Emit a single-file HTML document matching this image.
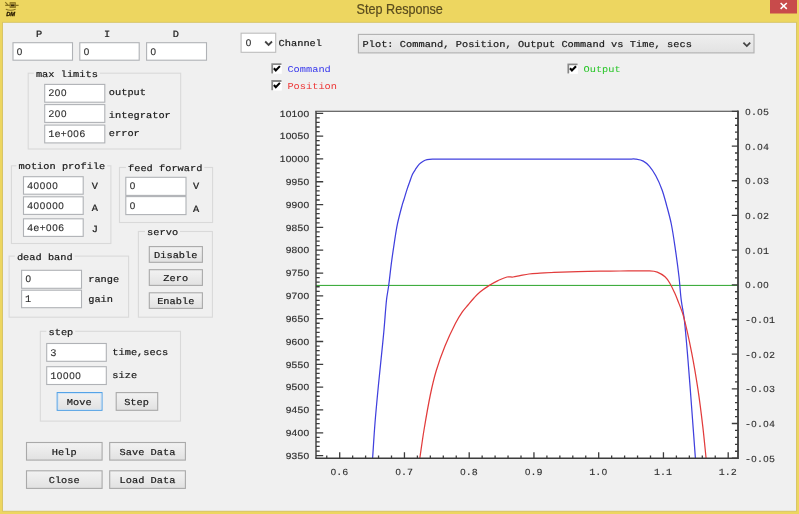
<!DOCTYPE html>
<html><head><meta charset="utf-8"><title>Step Response</title>
<style>
html,body{margin:0;padding:0;}
body{width:799px;height:514px;overflow:hidden;background:#EDD660;position:relative;}
#root{position:absolute;left:0;top:0;width:799px;height:514px;will-change:transform;}
.abs{position:absolute;left:0;top:0;}
#title{position:absolute;left:0;top:0.3px;width:799px;height:22px;text-align:center;font-family:"Liberation Sans",sans-serif;font-size:13.8px;line-height:20px;color:#5a4c1e;-webkit-text-stroke:0.2px #5a4c1e;transform:translateX(0.2px) scaleX(0.915);transform-origin:399.5px 0;}
svg text{font-family:"Liberation Mono",monospace;text-rendering:geometricPrecision;}
svg .z{font-family:"Liberation Sans",sans-serif;}
svg .s{font-family:"Liberation Sans",sans-serif;}
</style></head><body><div id="root">
<div id="title">Step Response</div>
<svg class="abs" width="799" height="514" viewBox="0 0 799 514">
<defs><linearGradient id="bg" x1="0" y1="0" x2="0" y2="1"><stop offset="0" stop-color="#f2f2f2"/><stop offset="0.45" stop-color="#ebebeb"/><stop offset="1" stop-color="#e1e1e1"/></linearGradient><linearGradient id="cg" x1="0" y1="0" x2="0" y2="1"><stop offset="0" stop-color="#efefef"/><stop offset="1" stop-color="#e2e2e2"/></linearGradient></defs>
<rect x="2.60" y="22.30" width="793.90" height="488.90" fill="#F0F0F0" stroke="#d3bf5c" stroke-width="0.8"/>
<rect x="770.00" y="0.00" width="27.00" height="13.50" fill="#C84B4B"/>
<path d="M780.6 3.0 L786.8 8.9 M786.8 3.0 L780.6 8.9" stroke="#fff" stroke-width="1.5" fill="none"/>
<g transform="translate(4,1)"><path d="M1.2 1.2 L4 4 M1.2 4.4 H14.6 M1.8 8.2 Q6.5 10.4 11.6 8.2" stroke="#8a7420" stroke-width="1.1" fill="none"/><rect x="6" y="1.6" width="5.4" height="5" fill="#a8923a" stroke="#8a7420" stroke-width="0.8"/><rect x="7" y="3.6" width="3.4" height="1.6" fill="#3a2c08"/><text x="2.2" y="14.5" class="s" font-size="5.8" font-weight="bold" font-style="italic" fill="#2a1d00" stroke="#2a1d00" stroke-width="0.3">DM</text></g>
<rect x="13.00" y="42.70" width="59.50" height="17.50" fill="#fff" stroke="#b0b2b6" stroke-width="1.1"/>
<rect x="79.80" y="42.70" width="59.40" height="17.50" fill="#fff" stroke="#b0b2b6" stroke-width="1.1"/>
<rect x="146.60" y="42.70" width="59.90" height="17.50" fill="#fff" stroke="#b0b2b6" stroke-width="1.1"/>
<rect x="28.20" y="73.20" width="152.50" height="75.80" fill="none" stroke="#d9d9d9" stroke-width="1.1"/>
<rect x="33.80" y="71.20" width="66.00" height="4.00" fill="#F0F0F0"/>
<rect x="44.70" y="84.40" width="60.10" height="17.80" fill="#fff" stroke="#b0b2b6" stroke-width="1.1"/>
<rect x="44.70" y="104.60" width="60.10" height="17.80" fill="#fff" stroke="#b0b2b6" stroke-width="1.1"/>
<rect x="44.70" y="125.10" width="60.10" height="17.80" fill="#fff" stroke="#b0b2b6" stroke-width="1.1"/>
<rect x="11.45" y="165.80" width="99.45" height="77.70" fill="none" stroke="#d9d9d9" stroke-width="1.1"/>
<rect x="16.40" y="163.80" width="90.80" height="4.00" fill="#F0F0F0"/>
<rect x="23.50" y="176.70" width="59.70" height="17.50" fill="#fff" stroke="#b0b2b6" stroke-width="1.1"/>
<rect x="23.50" y="196.80" width="59.70" height="17.60" fill="#fff" stroke="#b0b2b6" stroke-width="1.1"/>
<rect x="23.50" y="218.80" width="59.70" height="17.60" fill="#fff" stroke="#b0b2b6" stroke-width="1.1"/>
<rect x="119.50" y="167.50" width="93.10" height="55.00" fill="none" stroke="#d9d9d9" stroke-width="1.1"/>
<rect x="125.90" y="165.50" width="78.40" height="4.00" fill="#F0F0F0"/>
<rect x="125.80" y="177.30" width="60.20" height="18.10" fill="#fff" stroke="#b0b2b6" stroke-width="1.1"/>
<rect x="125.80" y="196.60" width="60.20" height="18.00" fill="#fff" stroke="#b0b2b6" stroke-width="1.1"/>
<rect x="138.40" y="231.50" width="74.00" height="85.70" fill="none" stroke="#d9d9d9" stroke-width="1.1"/>
<rect x="145.00" y="229.50" width="35.00" height="4.00" fill="#F0F0F0"/>
<rect x="149.30" y="246.60" width="53.10" height="15.70" fill="url(#bg)" stroke="#a9a9a9" stroke-width="1.1"/>
<rect x="149.30" y="269.70" width="53.10" height="15.70" fill="url(#bg)" stroke="#a9a9a9" stroke-width="1.1"/>
<rect x="149.30" y="292.80" width="53.10" height="15.60" fill="url(#bg)" stroke="#a9a9a9" stroke-width="1.1"/>
<rect x="9.10" y="256.10" width="119.50" height="61.10" fill="none" stroke="#d9d9d9" stroke-width="1.1"/>
<rect x="14.80" y="254.10" width="59.80" height="4.00" fill="#F0F0F0"/>
<rect x="21.60" y="270.30" width="59.90" height="18.00" fill="#fff" stroke="#b0b2b6" stroke-width="1.1"/>
<rect x="21.60" y="290.20" width="59.90" height="17.50" fill="#fff" stroke="#b0b2b6" stroke-width="1.1"/>
<rect x="40.30" y="331.30" width="140.20" height="89.80" fill="none" stroke="#d9d9d9" stroke-width="1.1"/>
<rect x="46.40" y="329.30" width="28.80" height="4.00" fill="#F0F0F0"/>
<rect x="46.70" y="343.50" width="59.60" height="17.80" fill="#fff" stroke="#b0b2b6" stroke-width="1.1"/>
<rect x="46.70" y="366.70" width="59.60" height="17.80" fill="#fff" stroke="#b0b2b6" stroke-width="1.1"/>
<rect x="57.20" y="392.60" width="44.80" height="17.70" fill="url(#bg)" stroke="#4d9fe6" stroke-width="1.1"/>
<rect x="58.20" y="393.60" width="42.80" height="15.70" fill="none" stroke="#cfe3f5" stroke-width="0.9"/>
<rect x="116.20" y="392.60" width="41.50" height="17.70" fill="url(#bg)" stroke="#a9a9a9" stroke-width="1.1"/>
<rect x="26.50" y="442.50" width="75.60" height="17.60" fill="url(#bg)" stroke="#a9a9a9" stroke-width="1.1"/>
<rect x="109.70" y="442.50" width="75.70" height="17.60" fill="url(#bg)" stroke="#a9a9a9" stroke-width="1.1"/>
<rect x="26.50" y="470.80" width="75.60" height="17.60" fill="url(#bg)" stroke="#a9a9a9" stroke-width="1.1"/>
<rect x="109.70" y="470.80" width="75.70" height="17.60" fill="url(#bg)" stroke="#a9a9a9" stroke-width="1.1"/>
<rect x="241.10" y="33.20" width="34.60" height="19.10" fill="#fff" stroke="#bdbdbd" stroke-width="1.1"/>
<path d="M265.20 41.50 L268.60 44.90 L272.00 41.50" stroke="#444" stroke-width="1.8" fill="none"/>
<rect x="358.40" y="34.40" width="395.60" height="18.50" fill="url(#cg)" stroke="#b0b0b0" stroke-width="1.1"/>
<path d="M743.40 42.70 L746.80 46.10 L750.20 42.70" stroke="#444" stroke-width="1.8" fill="none"/>
<rect x="271.20" y="63.20" width="10.60" height="10.60" fill="#fff"/>
<path d="M272.20 73.50 V64.20 H281.50" stroke="#888888" stroke-width="1.8" fill="none"/>
<path d="M273.90 68.20 L275.80 70.40 L279.90 66.10" stroke="#000" stroke-width="2.1" fill="none"/>
<rect x="271.20" y="80.00" width="10.60" height="10.60" fill="#fff"/>
<path d="M272.20 90.30 V81.00 H281.50" stroke="#888888" stroke-width="1.8" fill="none"/>
<path d="M273.90 85.00 L275.80 87.20 L279.90 82.90" stroke="#000" stroke-width="2.1" fill="none"/>
<rect x="567.30" y="63.30" width="10.60" height="10.60" fill="#fff"/>
<path d="M568.30 73.60 V64.30 H577.60" stroke="#888888" stroke-width="1.8" fill="none"/>
<path d="M570.00 68.30 L571.90 70.50 L576.00 66.20" stroke="#000" stroke-width="2.1" fill="none"/>
<rect x="316.0" y="111.2" width="421.79999999999995" height="347.0" fill="#fff"/>
<clipPath id="cp"><rect x="316.0" y="111.2" width="421.79999999999995" height="347.0"/></clipPath>
<path d="M316.0 285.4 H737.8" stroke="#2aa42a" stroke-width="1.0" fill="none"/>
<path d="M372.6 458.4 C373.40 446.60 374.06 434.79 375.0 423.0 C376.03 410.15 377.26 397.33 378.5 384.5 C380.19 366.99 382.14 349.51 383.8 332.0 C384.81 321.34 385.48 309.72 386.5 300.0 C387.01 295.14 388.06 290.35 388.7 285.5 C389.62 278.54 390.29 271.56 391.2 264.6 C392.15 257.32 393.19 250.06 394.3 242.8 C395.26 236.55 396.11 230.29 397.4 224.1 C398.72 217.78 401.15 208.89 402.1 205.3 C402.58 203.51 403.25 201.77 403.8 200.0 C404.90 196.46 406.01 192.58 407.2 188.9 C407.94 186.61 408.78 184.36 409.6 182.1 C410.55 179.49 411.34 176.82 412.5 174.3 C413.28 172.60 414.36 171.06 415.4 169.5 C416.63 167.65 417.78 165.72 419.3 164.1 C420.41 162.92 421.79 162.00 423.2 161.2 C424.41 160.52 425.74 160.01 427.1 159.7 C428.87 159.30 430.69 159.19 432.5 159.1 C435.00 158.97 437.50 159.05 440.0 159.1 C445.00 159.05 626.33 159.05 630.0 159.1 C631.83 159.05 633.69 158.82 635.5 159.1 C638.15 159.51 640.92 159.86 643.3 161.1 C645.71 162.36 647.74 164.33 649.5 166.4 C651.94 169.27 654.02 172.48 655.8 175.8 C658.20 180.27 660.26 184.94 662.0 189.7 C663.86 194.79 665.18 200.07 666.6 205.3 C668.28 211.50 670.04 217.70 671.3 224.0 C672.94 232.21 674.09 240.51 675.3 248.8 C676.66 258.12 677.92 267.45 679.0 276.8 C679.89 284.45 680.25 292.16 681.2 299.8 C682.02 306.40 683.56 312.89 684.3 319.5 C685.79 332.71 686.87 346.62 688.0 360.2 C689.33 376.19 690.49 392.20 691.7 408.2 C692.96 424.93 694.17 441.67 695.4 458.4" stroke="#4040de" stroke-width="1.25" fill="none" stroke-linejoin="round" clip-path="url(#cp)"/>
<path d="M419.8 458.4 C421.20 448.93 422.44 439.44 424.0 430.0 C425.94 418.31 427.90 406.61 430.3 395.0 C432.00 386.77 433.88 378.55 436.3 370.5 C438.79 362.20 441.73 354.03 445.0 346.0 C448.14 338.28 451.71 330.73 455.5 323.3 C457.55 319.28 459.95 315.43 462.5 311.7 C464.13 309.31 466.14 307.21 468.0 305.0 C469.98 302.65 471.92 300.26 474.0 298.0 C475.92 295.92 477.82 293.80 480.0 292.0 C482.84 289.65 485.89 287.57 489.0 285.6 C491.90 283.76 494.90 282.08 498.0 280.6 C500.92 279.21 503.86 277.75 507.0 277.0 C508.94 276.53 511.01 277.21 513.0 277.0 C515.37 276.75 517.66 276.04 520.0 275.6 C522.99 275.04 525.97 274.36 529.0 274.0 C532.65 273.56 536.33 273.43 540.0 273.2 C544.66 272.90 549.33 272.60 554.0 272.4 C562.00 272.06 570.00 271.81 578.0 271.6 C585.33 271.41 592.67 271.30 600.0 271.2 C606.67 271.10 613.33 271.04 620.0 271.0 C629.83 270.94 644.25 270.75 649.5 270.9 C652.13 270.98 654.84 271.16 657.3 272.1 C660.11 273.17 662.74 274.81 665.0 276.8 C666.95 278.51 668.36 280.78 669.7 283.0 C671.50 285.97 672.94 289.15 674.4 292.3 C675.54 294.75 676.54 297.27 677.5 299.8 C679.42 304.86 682.06 310.85 683.6 316.6 C686.68 328.09 689.31 340.67 691.7 352.8 C694.11 365.04 696.14 377.36 698.0 389.7 C699.84 401.97 701.35 414.28 702.8 426.6 C704.05 437.18 705.00 447.80 706.1 458.4" stroke="#e23c3c" stroke-width="1.25" fill="none" stroke-linejoin="round" clip-path="url(#cp)"/>
<path d="M316.0 458.2 V111.2" stroke="#3c3c3c" stroke-width="1.4" fill="none"/>
<path d="M315.3 111.2 H737.8" stroke="#3c3c3c" stroke-width="1.15" fill="none"/>
<path d="M738.0 110.60000000000001 V459.09999999999997" stroke="#3c3c3c" stroke-width="1.8" fill="none"/>
<path d="M315.3 458.34999999999997 H737.8" stroke="#3c3c3c" stroke-width="1.5" fill="none"/>
<path d="M316.0 113.30 h7.2 M316.0 117.86 h3.7 M316.0 122.43 h3.7 M316.0 126.99 h3.7 M316.0 131.56 h3.7 M316.0 136.12 h7.2 M316.0 140.68 h3.7 M316.0 145.25 h3.7 M316.0 149.81 h3.7 M316.0 154.38 h3.7 M316.0 158.94 h7.2 M316.0 163.50 h3.7 M316.0 168.07 h3.7 M316.0 172.63 h3.7 M316.0 177.20 h3.7 M316.0 181.76 h7.2 M316.0 186.32 h3.7 M316.0 190.89 h3.7 M316.0 195.45 h3.7 M316.0 200.02 h3.7 M316.0 204.58 h7.2 M316.0 209.14 h3.7 M316.0 213.71 h3.7 M316.0 218.27 h3.7 M316.0 222.84 h3.7 M316.0 227.40 h7.2 M316.0 231.96 h3.7 M316.0 236.53 h3.7 M316.0 241.09 h3.7 M316.0 245.66 h3.7 M316.0 250.22 h7.2 M316.0 254.78 h3.7 M316.0 259.35 h3.7 M316.0 263.91 h3.7 M316.0 268.48 h3.7 M316.0 273.04 h7.2 M316.0 277.60 h3.7 M316.0 282.17 h3.7 M316.0 286.73 h3.7 M316.0 291.30 h3.7 M316.0 295.86 h7.2 M316.0 300.42 h3.7 M316.0 304.99 h3.7 M316.0 309.55 h3.7 M316.0 314.12 h3.7 M316.0 318.68 h7.2 M316.0 323.24 h3.7 M316.0 327.81 h3.7 M316.0 332.37 h3.7 M316.0 336.94 h3.7 M316.0 341.50 h7.2 M316.0 346.06 h3.7 M316.0 350.63 h3.7 M316.0 355.19 h3.7 M316.0 359.76 h3.7 M316.0 364.32 h7.2 M316.0 368.88 h3.7 M316.0 373.45 h3.7 M316.0 378.01 h3.7 M316.0 382.58 h3.7 M316.0 387.14 h7.2 M316.0 391.70 h3.7 M316.0 396.27 h3.7 M316.0 400.83 h3.7 M316.0 405.40 h3.7 M316.0 409.96 h7.2 M316.0 414.52 h3.7 M316.0 419.09 h3.7 M316.0 423.65 h3.7 M316.0 428.22 h3.7 M316.0 432.78 h7.2 M316.0 437.34 h3.7 M316.0 441.91 h3.7 M316.0 446.47 h3.7 M316.0 451.04 h3.7 M316.0 455.60 h7.2 " stroke="#3c3c3c" stroke-width="1.3" fill="none"/>
<path d="M737.8 111.40 h-6 M737.8 118.34 h-2.8 M737.8 125.27 h-2.8 M737.8 132.21 h-2.8 M737.8 139.14 h-2.8 M737.8 146.08 h-6 M737.8 153.02 h-2.8 M737.8 159.95 h-2.8 M737.8 166.89 h-2.8 M737.8 173.82 h-2.8 M737.8 180.76 h-6 M737.8 187.70 h-2.8 M737.8 194.63 h-2.8 M737.8 201.57 h-2.8 M737.8 208.50 h-2.8 M737.8 215.44 h-6 M737.8 222.38 h-2.8 M737.8 229.31 h-2.8 M737.8 236.25 h-2.8 M737.8 243.18 h-2.8 M737.8 250.12 h-6 M737.8 257.06 h-2.8 M737.8 263.99 h-2.8 M737.8 270.93 h-2.8 M737.8 277.86 h-2.8 M737.8 284.80 h-6 M737.8 291.74 h-2.8 M737.8 298.67 h-2.8 M737.8 305.61 h-2.8 M737.8 312.54 h-2.8 M737.8 319.48 h-6 M737.8 326.42 h-2.8 M737.8 333.35 h-2.8 M737.8 340.29 h-2.8 M737.8 347.22 h-2.8 M737.8 354.16 h-6 M737.8 361.10 h-2.8 M737.8 368.03 h-2.8 M737.8 374.97 h-2.8 M737.8 381.90 h-2.8 M737.8 388.84 h-6 M737.8 395.78 h-2.8 M737.8 402.71 h-2.8 M737.8 409.65 h-2.8 M737.8 416.58 h-2.8 M737.8 423.52 h-6 M737.8 430.46 h-2.8 M737.8 437.39 h-2.8 M737.8 444.33 h-2.8 M737.8 451.26 h-2.8 M737.8 458.20 h-6 " stroke="#3c3c3c" stroke-width="1.3" fill="none"/>
<path d="M326.75 458.2 v-2.6 M339.70 458.2 v-6 M352.65 458.2 v-2.6 M365.60 458.2 v-2.6 M378.55 458.2 v-2.6 M391.50 458.2 v-2.6 M404.45 458.2 v-6 M417.40 458.2 v-2.6 M430.35 458.2 v-2.6 M443.30 458.2 v-2.6 M456.25 458.2 v-2.6 M469.20 458.2 v-6 M482.15 458.2 v-2.6 M495.10 458.2 v-2.6 M508.05 458.2 v-2.6 M521.00 458.2 v-2.6 M533.95 458.2 v-6 M546.90 458.2 v-2.6 M559.85 458.2 v-2.6 M572.80 458.2 v-2.6 M585.75 458.2 v-2.6 M598.70 458.2 v-6 M611.65 458.2 v-2.6 M624.60 458.2 v-2.6 M637.55 458.2 v-2.6 M650.50 458.2 v-2.6 M663.45 458.2 v-6 M676.40 458.2 v-2.6 M689.35 458.2 v-2.6 M702.30 458.2 v-2.6 M715.25 458.2 v-2.6 M728.20 458.2 v-6 " stroke="#3c3c3c" stroke-width="1.3" fill="none"/>
<text transform="translate(36.00,36.70) scale(1,0.93)" x="0.00" y="0" font-size="10.33" fill="#1c1c1c" stroke="#1c1c1c" stroke-width="0.23" xml:space="preserve">P</text>
<text transform="translate(104.00,36.70) scale(1,0.93)" x="0.00" y="0" font-size="10.33" fill="#1c1c1c" stroke="#1c1c1c" stroke-width="0.23" xml:space="preserve">I</text>
<text transform="translate(172.80,36.70) scale(1,0.93)" x="0.00" y="0" font-size="10.33" fill="#1c1c1c" stroke="#1c1c1c" stroke-width="0.23" xml:space="preserve">D</text>
<text transform="translate(16.50,54.70) scale(1,0.985)" x="0.34" y="0" font-size="10.33" fill="#2e2e2e" stroke="#2e2e2e" stroke-width="0.12" xml:space="preserve"><tspan class="z" font-size="9.90">0</tspan></text>
<text transform="translate(83.30,54.70) scale(1,0.985)" x="0.34" y="0" font-size="10.33" fill="#2e2e2e" stroke="#2e2e2e" stroke-width="0.12" xml:space="preserve"><tspan class="z" font-size="9.90">0</tspan></text>
<text transform="translate(150.10,54.70) scale(1,0.985)" x="0.34" y="0" font-size="10.33" fill="#2e2e2e" stroke="#2e2e2e" stroke-width="0.12" xml:space="preserve"><tspan class="z" font-size="9.90">0</tspan></text>
<text transform="translate(35.90,76.80) scale(1,0.88)" x="0.00 6.20 12.40 18.60 24.80 31.00 37.20 43.40 49.60 55.80" y="0" font-size="10.33" fill="#1c1c1c" stroke="#1c1c1c" stroke-width="0.23" xml:space="preserve">max limits</text>
<text transform="translate(48.20,96.40) scale(1,0.985)" x="0.00 6.54 12.74" y="0" font-size="10.33" fill="#2e2e2e" stroke="#2e2e2e" stroke-width="0.12" xml:space="preserve">2<tspan class="z" font-size="9.90">0</tspan><tspan class="z" font-size="9.90">0</tspan></text>
<text transform="translate(48.20,116.60) scale(1,0.985)" x="0.00 6.54 12.74" y="0" font-size="10.33" fill="#2e2e2e" stroke="#2e2e2e" stroke-width="0.12" xml:space="preserve">2<tspan class="z" font-size="9.90">0</tspan><tspan class="z" font-size="9.90">0</tspan></text>
<text transform="translate(48.20,137.10) scale(1,0.985)" x="0.00 6.20 12.40 18.94 25.14 31.00" y="0" font-size="10.33" fill="#2e2e2e" stroke="#2e2e2e" stroke-width="0.12" xml:space="preserve">1e+<tspan class="z" font-size="9.90">0</tspan><tspan class="z" font-size="9.90">0</tspan>6</text>
<text transform="translate(108.80,95.20) scale(1,0.88)" x="0.00 6.20 12.40 18.60 24.80 31.00" y="0" font-size="10.33" fill="#1c1c1c" stroke="#1c1c1c" stroke-width="0.23" xml:space="preserve">output</text>
<text transform="translate(108.80,117.50) scale(1,0.88)" x="0.00 6.20 12.40 18.60 24.80 31.00 37.20 43.40 49.60 55.80" y="0" font-size="10.33" fill="#1c1c1c" stroke="#1c1c1c" stroke-width="0.23" xml:space="preserve">integrator</text>
<text transform="translate(108.80,136.40) scale(1,0.88)" x="0.00 6.20 12.40 18.60 24.80" y="0" font-size="10.33" fill="#1c1c1c" stroke="#1c1c1c" stroke-width="0.23" xml:space="preserve">error</text>
<text transform="translate(18.50,169.40) scale(1,0.88)" x="0.00 6.20 12.40 18.60 24.80 31.00 37.20 43.40 49.60 55.80 62.00 68.20 74.40 80.60" y="0" font-size="10.33" fill="#1c1c1c" stroke="#1c1c1c" stroke-width="0.23" xml:space="preserve">motion profile</text>
<text transform="translate(27.00,188.70) scale(1,0.985)" x="0.00 6.54 12.74 18.94 25.14" y="0" font-size="10.33" fill="#2e2e2e" stroke="#2e2e2e" stroke-width="0.12" xml:space="preserve">4<tspan class="z" font-size="9.90">0</tspan><tspan class="z" font-size="9.90">0</tspan><tspan class="z" font-size="9.90">0</tspan><tspan class="z" font-size="9.90">0</tspan></text>
<text transform="translate(27.00,208.80) scale(1,0.985)" x="0.00 6.54 12.74 18.94 25.14 31.34" y="0" font-size="10.33" fill="#2e2e2e" stroke="#2e2e2e" stroke-width="0.12" xml:space="preserve">4<tspan class="z" font-size="9.90">0</tspan><tspan class="z" font-size="9.90">0</tspan><tspan class="z" font-size="9.90">0</tspan><tspan class="z" font-size="9.90">0</tspan><tspan class="z" font-size="9.90">0</tspan></text>
<text transform="translate(27.00,230.80) scale(1,0.985)" x="0.00 6.20 12.40 18.94 25.14 31.00" y="0" font-size="10.33" fill="#2e2e2e" stroke="#2e2e2e" stroke-width="0.12" xml:space="preserve">4e+<tspan class="z" font-size="9.90">0</tspan><tspan class="z" font-size="9.90">0</tspan>6</text>
<text transform="translate(91.80,188.80) scale(1,0.93)" x="0.00" y="0" font-size="10.33" fill="#1c1c1c" stroke="#1c1c1c" stroke-width="0.23" xml:space="preserve">V</text>
<text transform="translate(91.80,210.90) scale(1,0.93)" x="0.00" y="0" font-size="10.33" fill="#1c1c1c" stroke="#1c1c1c" stroke-width="0.23" xml:space="preserve">A</text>
<text transform="translate(91.80,232.30) scale(1,0.93)" x="0.00" y="0" font-size="10.33" fill="#1c1c1c" stroke="#1c1c1c" stroke-width="0.23" xml:space="preserve">J</text>
<text transform="translate(128.00,171.10) scale(1,0.88)" x="0.00 6.20 12.40 18.60 24.80 31.00 37.20 43.40 49.60 55.80 62.00 68.20" y="0" font-size="10.33" fill="#1c1c1c" stroke="#1c1c1c" stroke-width="0.23" xml:space="preserve">feed forward</text>
<text transform="translate(129.30,189.30) scale(1,0.985)" x="0.34" y="0" font-size="10.33" fill="#2e2e2e" stroke="#2e2e2e" stroke-width="0.12" xml:space="preserve"><tspan class="z" font-size="9.90">0</tspan></text>
<text transform="translate(129.30,208.60) scale(1,0.985)" x="0.34" y="0" font-size="10.33" fill="#2e2e2e" stroke="#2e2e2e" stroke-width="0.12" xml:space="preserve"><tspan class="z" font-size="9.90">0</tspan></text>
<text transform="translate(193.00,188.80) scale(1,0.93)" x="0.00" y="0" font-size="10.33" fill="#1c1c1c" stroke="#1c1c1c" stroke-width="0.23" xml:space="preserve">V</text>
<text transform="translate(193.00,212.00) scale(1,0.93)" x="0.00" y="0" font-size="10.33" fill="#1c1c1c" stroke="#1c1c1c" stroke-width="0.23" xml:space="preserve">A</text>
<text transform="translate(147.10,235.10) scale(1,0.88)" x="0.00 6.20 12.40 18.60 24.80" y="0" font-size="10.33" fill="#1c1c1c" stroke="#1c1c1c" stroke-width="0.23" xml:space="preserve">servo</text>
<text transform="translate(154.05,257.65) scale(1,0.88)" x="0.00 6.20 12.40 18.60 24.80 31.00 37.20" y="0" font-size="10.33" fill="#1c1c1c" stroke="#1c1c1c" stroke-width="0.23" xml:space="preserve">Disable</text>
<text transform="translate(163.35,280.75) scale(1,0.88)" x="0.00 6.20 12.40 18.60" y="0" font-size="10.33" fill="#1c1c1c" stroke="#1c1c1c" stroke-width="0.23" xml:space="preserve">Zero</text>
<text transform="translate(157.15,303.80) scale(1,0.88)" x="0.00 6.20 12.40 18.60 24.80 31.00" y="0" font-size="10.33" fill="#1c1c1c" stroke="#1c1c1c" stroke-width="0.23" xml:space="preserve">Enable</text>
<text transform="translate(16.90,259.70) scale(1,0.88)" x="0.00 6.20 12.40 18.60 24.80 31.00 37.20 43.40 49.60" y="0" font-size="10.33" fill="#1c1c1c" stroke="#1c1c1c" stroke-width="0.23" xml:space="preserve">dead band</text>
<text transform="translate(25.10,282.30) scale(1,0.985)" x="0.34" y="0" font-size="10.33" fill="#2e2e2e" stroke="#2e2e2e" stroke-width="0.12" xml:space="preserve"><tspan class="z" font-size="9.90">0</tspan></text>
<text transform="translate(25.10,302.20) scale(1,0.985)" x="0.00" y="0" font-size="10.33" fill="#2e2e2e" stroke="#2e2e2e" stroke-width="0.12" xml:space="preserve">1</text>
<text transform="translate(88.20,282.00) scale(1,0.88)" x="0.00 6.20 12.40 18.60 24.80" y="0" font-size="10.33" fill="#1c1c1c" stroke="#1c1c1c" stroke-width="0.23" xml:space="preserve">range</text>
<text transform="translate(88.20,302.40) scale(1,0.88)" x="0.00 6.20 12.40 18.60" y="0" font-size="10.33" fill="#1c1c1c" stroke="#1c1c1c" stroke-width="0.23" xml:space="preserve">gain</text>
<text transform="translate(48.50,334.90) scale(1,0.88)" x="0.00 6.20 12.40 18.60" y="0" font-size="10.33" fill="#1c1c1c" stroke="#1c1c1c" stroke-width="0.23" xml:space="preserve">step</text>
<text transform="translate(50.20,355.50) scale(1,0.985)" x="0.00" y="0" font-size="10.33" fill="#2e2e2e" stroke="#2e2e2e" stroke-width="0.12" xml:space="preserve">3</text>
<text transform="translate(50.20,378.70) scale(1,0.985)" x="0.00 6.54 12.74 18.94 25.14" y="0" font-size="10.33" fill="#2e2e2e" stroke="#2e2e2e" stroke-width="0.12" xml:space="preserve">1<tspan class="z" font-size="9.90">0</tspan><tspan class="z" font-size="9.90">0</tspan><tspan class="z" font-size="9.90">0</tspan><tspan class="z" font-size="9.90">0</tspan></text>
<text transform="translate(112.30,355.40) scale(1,0.88)" x="0.00 6.20 12.40 18.60 24.80 31.00 37.20 43.40 49.60" y="0" font-size="10.33" fill="#1c1c1c" stroke="#1c1c1c" stroke-width="0.23" xml:space="preserve">time,secs</text>
<text transform="translate(112.30,377.80) scale(1,0.88)" x="0.00 6.20 12.40 18.60" y="0" font-size="10.33" fill="#1c1c1c" stroke="#1c1c1c" stroke-width="0.23" xml:space="preserve">size</text>
<text transform="translate(66.80,404.80) scale(1,0.88)" x="0.00 6.20 12.40 18.60" y="0" font-size="10.33" fill="#1c1c1c" stroke="#1c1c1c" stroke-width="0.23" xml:space="preserve">Move</text>
<text transform="translate(124.15,404.80) scale(1,0.88)" x="0.00 6.20 12.40 18.60" y="0" font-size="10.33" fill="#1c1c1c" stroke="#1c1c1c" stroke-width="0.23" xml:space="preserve">Step</text>
<text transform="translate(51.80,454.50) scale(1,0.88)" x="0.00 6.20 12.40 18.60" y="0" font-size="10.33" fill="#1c1c1c" stroke="#1c1c1c" stroke-width="0.23" xml:space="preserve">Help</text>
<text transform="translate(119.55,454.50) scale(1,0.88)" x="0.00 6.20 12.40 18.60 24.80 31.00 37.20 43.40 49.60" y="0" font-size="10.33" fill="#1c1c1c" stroke="#1c1c1c" stroke-width="0.23" xml:space="preserve">Save Data</text>
<text transform="translate(48.70,482.80) scale(1,0.88)" x="0.00 6.20 12.40 18.60 24.80" y="0" font-size="10.33" fill="#1c1c1c" stroke="#1c1c1c" stroke-width="0.23" xml:space="preserve">Close</text>
<text transform="translate(119.55,482.80) scale(1,0.88)" x="0.00 6.20 12.40 18.60 24.80 31.00 37.20 43.40 49.60" y="0" font-size="10.33" fill="#1c1c1c" stroke="#1c1c1c" stroke-width="0.23" xml:space="preserve">Load Data</text>
<text transform="translate(245.30,46.10) scale(1,0.985)" x="0.34" y="0" font-size="10.33" fill="#2e2e2e" stroke="#2e2e2e" stroke-width="0.12" xml:space="preserve"><tspan class="z" font-size="9.90">0</tspan></text>
<text transform="translate(278.60,45.70) scale(1,0.88)" x="0.00 6.20 12.40 18.60 24.80 31.00 37.20" y="0" font-size="10.33" fill="#1c1c1c" stroke="#1c1c1c" stroke-width="0.23" xml:space="preserve">Channel</text>
<text transform="translate(362.50,47.20) scale(1,0.88)" x="0.00 6.21 12.43 18.64 24.86 31.07 37.29 43.50 49.72 55.94 62.15 68.36 74.58 80.80 87.01 93.22 99.44 105.66 111.87 118.08 124.30 130.51 136.73 142.94 149.16 155.38 161.59 167.81 174.02 180.23 186.45 192.66 198.88 205.09 211.31 217.53 223.74 229.95 236.17 242.38 248.60 254.81 261.03 267.25 273.46 279.68 285.89 292.11 298.32 304.53 310.75 316.96 323.18" y="0" font-size="10.33" fill="#1c1c1c" stroke="#1c1c1c" stroke-width="0.23" xml:space="preserve">Plot: Command, Position, Output Command vs Time, secs</text>
<text transform="translate(287.40,72.00) scale(1,0.88)" x="0.00 6.20 12.40 18.60 24.80 31.00 37.20" y="0" font-size="10.33" fill="#3a3aec" stroke="#3a3aec" stroke-width="0.02" xml:space="preserve">Command</text>
<text transform="translate(287.40,88.70) scale(1,0.88)" x="0.00 6.20 12.40 18.60 24.80 31.00 37.20 43.40" y="0" font-size="10.33" fill="#ec3a3a" stroke="#ec3a3a" stroke-width="0.02" xml:space="preserve">Position</text>
<text transform="translate(583.50,72.00) scale(1,0.88)" x="0.00 6.20 12.40 18.60 24.80 31.00" y="0" font-size="10.33" fill="#2ac62a" stroke="#2ac62a" stroke-width="0.02" xml:space="preserve">Output</text>
<text class="s" transform="translate(279.75,116.50) scale(1,0.88)" x="0.00 5.93 11.86 17.79 23.72" y="0" font-size="10.2" fill="#303030" stroke="#303030" stroke-width="0.2">10100</text>
<text class="s" transform="translate(279.75,139.32) scale(1,0.88)" x="0.00 5.93 11.86 17.79 23.72" y="0" font-size="10.2" fill="#303030" stroke="#303030" stroke-width="0.2">10050</text>
<text class="s" transform="translate(279.75,162.14) scale(1,0.88)" x="0.00 5.93 11.86 17.79 23.72" y="0" font-size="10.2" fill="#303030" stroke="#303030" stroke-width="0.2">10000</text>
<text class="s" transform="translate(285.68,184.96) scale(1,0.88)" x="0.00 5.93 11.86 17.79" y="0" font-size="10.2" fill="#303030" stroke="#303030" stroke-width="0.2">9950</text>
<text class="s" transform="translate(285.68,207.78) scale(1,0.88)" x="0.00 5.93 11.86 17.79" y="0" font-size="10.2" fill="#303030" stroke="#303030" stroke-width="0.2">9900</text>
<text class="s" transform="translate(285.68,230.60) scale(1,0.88)" x="0.00 5.93 11.86 17.79" y="0" font-size="10.2" fill="#303030" stroke="#303030" stroke-width="0.2">9850</text>
<text class="s" transform="translate(285.68,253.42) scale(1,0.88)" x="0.00 5.93 11.86 17.79" y="0" font-size="10.2" fill="#303030" stroke="#303030" stroke-width="0.2">9800</text>
<text class="s" transform="translate(285.68,276.24) scale(1,0.88)" x="0.00 5.93 11.86 17.79" y="0" font-size="10.2" fill="#303030" stroke="#303030" stroke-width="0.2">9750</text>
<text class="s" transform="translate(285.68,299.06) scale(1,0.88)" x="0.00 5.93 11.86 17.79" y="0" font-size="10.2" fill="#303030" stroke="#303030" stroke-width="0.2">9700</text>
<text class="s" transform="translate(285.68,321.88) scale(1,0.88)" x="0.00 5.93 11.86 17.79" y="0" font-size="10.2" fill="#303030" stroke="#303030" stroke-width="0.2">9650</text>
<text class="s" transform="translate(285.68,344.70) scale(1,0.88)" x="0.00 5.93 11.86 17.79" y="0" font-size="10.2" fill="#303030" stroke="#303030" stroke-width="0.2">9600</text>
<text class="s" transform="translate(285.68,367.52) scale(1,0.88)" x="0.00 5.93 11.86 17.79" y="0" font-size="10.2" fill="#303030" stroke="#303030" stroke-width="0.2">9550</text>
<text class="s" transform="translate(285.68,390.34) scale(1,0.88)" x="0.00 5.93 11.86 17.79" y="0" font-size="10.2" fill="#303030" stroke="#303030" stroke-width="0.2">9500</text>
<text class="s" transform="translate(285.68,413.16) scale(1,0.88)" x="0.00 5.93 11.86 17.79" y="0" font-size="10.2" fill="#303030" stroke="#303030" stroke-width="0.2">9450</text>
<text class="s" transform="translate(285.68,435.98) scale(1,0.88)" x="0.00 5.93 11.86 17.79" y="0" font-size="10.2" fill="#303030" stroke="#303030" stroke-width="0.2">9400</text>
<text class="s" transform="translate(285.68,458.80) scale(1,0.88)" x="0.00 5.93 11.86 17.79" y="0" font-size="10.2" fill="#303030" stroke="#303030" stroke-width="0.2">9350</text>
<text transform="translate(744.90,114.90) scale(1,0.93)" x="0.33 6.00 12.33 18.00" y="0" font-size="10.0" fill="#303030" stroke="#303030" stroke-width="0.13" xml:space="preserve"><tspan class="z" font-size="9.58">0</tspan>.<tspan class="z" font-size="9.58">0</tspan>5</text>
<text transform="translate(744.90,149.58) scale(1,0.93)" x="0.33 6.00 12.33 18.00" y="0" font-size="10.0" fill="#303030" stroke="#303030" stroke-width="0.13" xml:space="preserve"><tspan class="z" font-size="9.58">0</tspan>.<tspan class="z" font-size="9.58">0</tspan>4</text>
<text transform="translate(744.90,184.26) scale(1,0.93)" x="0.33 6.00 12.33 18.00" y="0" font-size="10.0" fill="#303030" stroke="#303030" stroke-width="0.13" xml:space="preserve"><tspan class="z" font-size="9.58">0</tspan>.<tspan class="z" font-size="9.58">0</tspan>3</text>
<text transform="translate(744.90,218.94) scale(1,0.93)" x="0.33 6.00 12.33 18.00" y="0" font-size="10.0" fill="#303030" stroke="#303030" stroke-width="0.13" xml:space="preserve"><tspan class="z" font-size="9.58">0</tspan>.<tspan class="z" font-size="9.58">0</tspan>2</text>
<text transform="translate(744.90,253.62) scale(1,0.93)" x="0.33 6.00 12.33 18.00" y="0" font-size="10.0" fill="#303030" stroke="#303030" stroke-width="0.13" xml:space="preserve"><tspan class="z" font-size="9.58">0</tspan>.<tspan class="z" font-size="9.58">0</tspan>1</text>
<text transform="translate(744.90,288.30) scale(1,0.93)" x="0.33 6.00 12.33 18.33" y="0" font-size="10.0" fill="#303030" stroke="#303030" stroke-width="0.13" xml:space="preserve"><tspan class="z" font-size="9.58">0</tspan>.<tspan class="z" font-size="9.58">0</tspan><tspan class="z" font-size="9.58">0</tspan></text>
<text transform="translate(744.90,322.98) scale(1,0.93)" x="0.00 6.33 12.00 18.33 24.00" y="0" font-size="10.0" fill="#303030" stroke="#303030" stroke-width="0.13" xml:space="preserve">-<tspan class="z" font-size="9.58">0</tspan>.<tspan class="z" font-size="9.58">0</tspan>1</text>
<text transform="translate(744.90,357.66) scale(1,0.93)" x="0.00 6.33 12.00 18.33 24.00" y="0" font-size="10.0" fill="#303030" stroke="#303030" stroke-width="0.13" xml:space="preserve">-<tspan class="z" font-size="9.58">0</tspan>.<tspan class="z" font-size="9.58">0</tspan>2</text>
<text transform="translate(744.90,392.34) scale(1,0.93)" x="0.00 6.33 12.00 18.33 24.00" y="0" font-size="10.0" fill="#303030" stroke="#303030" stroke-width="0.13" xml:space="preserve">-<tspan class="z" font-size="9.58">0</tspan>.<tspan class="z" font-size="9.58">0</tspan>3</text>
<text transform="translate(744.90,427.02) scale(1,0.93)" x="0.00 6.33 12.00 18.33 24.00" y="0" font-size="10.0" fill="#303030" stroke="#303030" stroke-width="0.13" xml:space="preserve">-<tspan class="z" font-size="9.58">0</tspan>.<tspan class="z" font-size="9.58">0</tspan>4</text>
<text transform="translate(744.90,461.70) scale(1,0.93)" x="0.00 6.33 12.00 18.33 24.00" y="0" font-size="10.0" fill="#303030" stroke="#303030" stroke-width="0.13" xml:space="preserve">-<tspan class="z" font-size="9.58">0</tspan>.<tspan class="z" font-size="9.58">0</tspan>5</text>
<text transform="translate(330.30,474.90) scale(1,0.93)" x="0.33 6.00 12.00" y="0" font-size="10.0" fill="#303030" stroke="#303030" stroke-width="0.13" xml:space="preserve"><tspan class="z" font-size="9.58">0</tspan>.6</text>
<text transform="translate(395.05,474.90) scale(1,0.93)" x="0.33 6.00 12.00" y="0" font-size="10.0" fill="#303030" stroke="#303030" stroke-width="0.13" xml:space="preserve"><tspan class="z" font-size="9.58">0</tspan>.7</text>
<text transform="translate(459.80,474.90) scale(1,0.93)" x="0.33 6.00 12.00" y="0" font-size="10.0" fill="#303030" stroke="#303030" stroke-width="0.13" xml:space="preserve"><tspan class="z" font-size="9.58">0</tspan>.8</text>
<text transform="translate(524.55,474.90) scale(1,0.93)" x="0.33 6.00 12.00" y="0" font-size="10.0" fill="#303030" stroke="#303030" stroke-width="0.13" xml:space="preserve"><tspan class="z" font-size="9.58">0</tspan>.9</text>
<text transform="translate(589.30,474.90) scale(1,0.93)" x="0.00 6.00 12.33" y="0" font-size="10.0" fill="#303030" stroke="#303030" stroke-width="0.13" xml:space="preserve">1.<tspan class="z" font-size="9.58">0</tspan></text>
<text transform="translate(654.05,474.90) scale(1,0.93)" x="0.00 6.00 12.00" y="0" font-size="10.0" fill="#303030" stroke="#303030" stroke-width="0.13" xml:space="preserve">1.1</text>
<text transform="translate(718.80,474.90) scale(1,0.93)" x="0.00 6.00 12.00" y="0" font-size="10.0" fill="#303030" stroke="#303030" stroke-width="0.13" xml:space="preserve">1.2</text>
</svg>
</div></body></html>
